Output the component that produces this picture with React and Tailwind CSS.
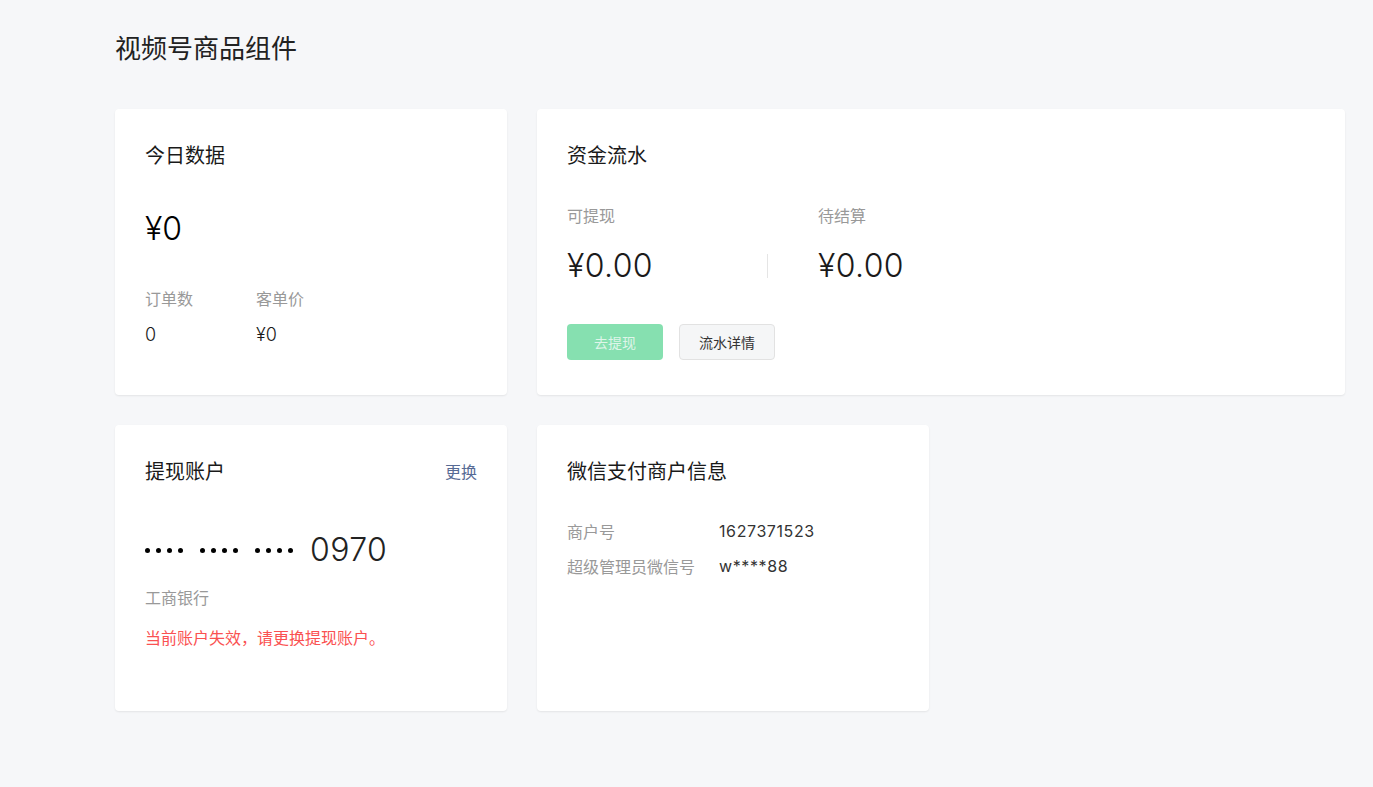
import React from 'react';

const font = { fontFamily: '"Noto Sans CJK SC", "Liberation Sans", sans-serif' };
const num = { fontFamily: 'Inter, "Noto Sans CJK SC", sans-serif' };

function Card({ className = '', children }) {
  return (
    <div className={`bg-white rounded-[4px] shadow-[0_1px_2px_rgba(0,0,0,0.08)] px-[30px] pt-[32px] h-[286px] ${className}`}>
      {children}
    </div>
  );
}

function Dots() {
  return (
    <div className="flex items-center gap-[6px]">
      {[0, 1, 2, 3].map((i) => (
        <span key={i} className="w-[5px] h-[5px] rounded-full bg-black" />
      ))}
    </div>
  );
}

export default function App() {
  return (
    <div style={font} className="min-h-screen bg-[#f6f7f9] pl-[115px] pr-[28px] pt-[29px] pb-[76px] text-[#1a1a1a]">
      <h1 className="text-[26px] leading-[36px] font-normal text-[#222]">视频号商品组件</h1>

      <div className="mt-[44px] flex gap-[30px]">
        <Card className="w-[392px] shrink-0">
          <div className="text-[20px] leading-[28px]">今日数据</div>
          <div style={num} className="mt-[40px] text-[32px] leading-[40px] font-light text-black">¥0</div>
          <div className="mt-[38px] flex">
            <div className="w-[111px]">
              <div className="text-[16px] leading-[22px] text-[#999]">订单数</div>
              <div style={num} className="mt-[14px] text-[18px] leading-[24px] font-light">0</div>
            </div>
            <div>
              <div className="text-[16px] leading-[22px] text-[#999]">客单价</div>
              <div style={num} className="mt-[14px] text-[18px] leading-[24px] font-light">¥0</div>
            </div>
          </div>
        </Card>

        <Card className="flex-1">
          <div className="text-[20px] leading-[28px]">资金流水</div>
          <div className="mt-[35px] flex items-start">
            <div className="w-[200px]">
              <div className="text-[16px] leading-[22px] text-[#999]">可提现</div>
              <div style={num} className="mt-[18px] text-[32px] leading-[44px] font-light tracking-[0.4px]">¥0.00</div>
            </div>
            <div className="mt-[50px] w-px h-[24px] bg-[#e5e5e5]" />
            <div className="ml-[50px]">
              <div className="text-[16px] leading-[22px] text-[#999]">待结算</div>
              <div style={num} className="mt-[18px] text-[32px] leading-[44px] font-light tracking-[0.4px]">¥0.00</div>
            </div>
          </div>
          <div className="mt-[36px] flex gap-[16px]">
            <button className="w-[96px] h-[36px] rounded-[4px] bg-[#86e0b0] text-[14px] text-[#dff5e9]">去提现</button>
            <button className="w-[96px] h-[36px] rounded-[4px] bg-[#f5f6f7] border border-[#e2e2e2] text-[14px] text-[#333]">流水详情</button>
          </div>
        </Card>
      </div>

      <div className="mt-[30px] flex gap-[30px]">
        <Card className="w-[392px] shrink-0">
          <div className="flex items-center justify-between">
            <div className="text-[20px] leading-[28px]">提现账户</div>
            <div className="text-[16px] leading-[22px] text-[#576b95]">更换</div>
          </div>
          <div className="mt-[43px] flex items-center gap-[17px]">
            <Dots />
            <Dots />
            <Dots />
            <span style={num} className="text-[32px] leading-[44px] font-light tracking-[0.4px] text-[#222]">0970</span>
          </div>
          <div className="mt-[14px] text-[16px] leading-[22px] text-[#999]">工商银行</div>
          <div className="mt-[18px] text-[16px] leading-[22px] text-[#fa5151]">当前账户失效，请更换提现账户。</div>
        </Card>

        <Card className="w-[392px] shrink-0">
          <div className="text-[20px] leading-[28px]">微信支付商户信息</div>
          <div className="mt-[35px] flex text-[16px] leading-[22px]">
            <div className="w-[152px] text-[#999]">商户号</div>
            <div style={num} className="text-[#333] tracking-[0.6px]">1627371523</div>
          </div>
          <div className="mt-[13px] flex text-[16px] leading-[22px]">
            <div className="w-[152px] text-[#999]">超级管理员微信号</div>
            <div style={num} className="text-[#333] tracking-[0.6px]">w****88</div>
          </div>
        </Card>
      </div>
    </div>
  );
}
